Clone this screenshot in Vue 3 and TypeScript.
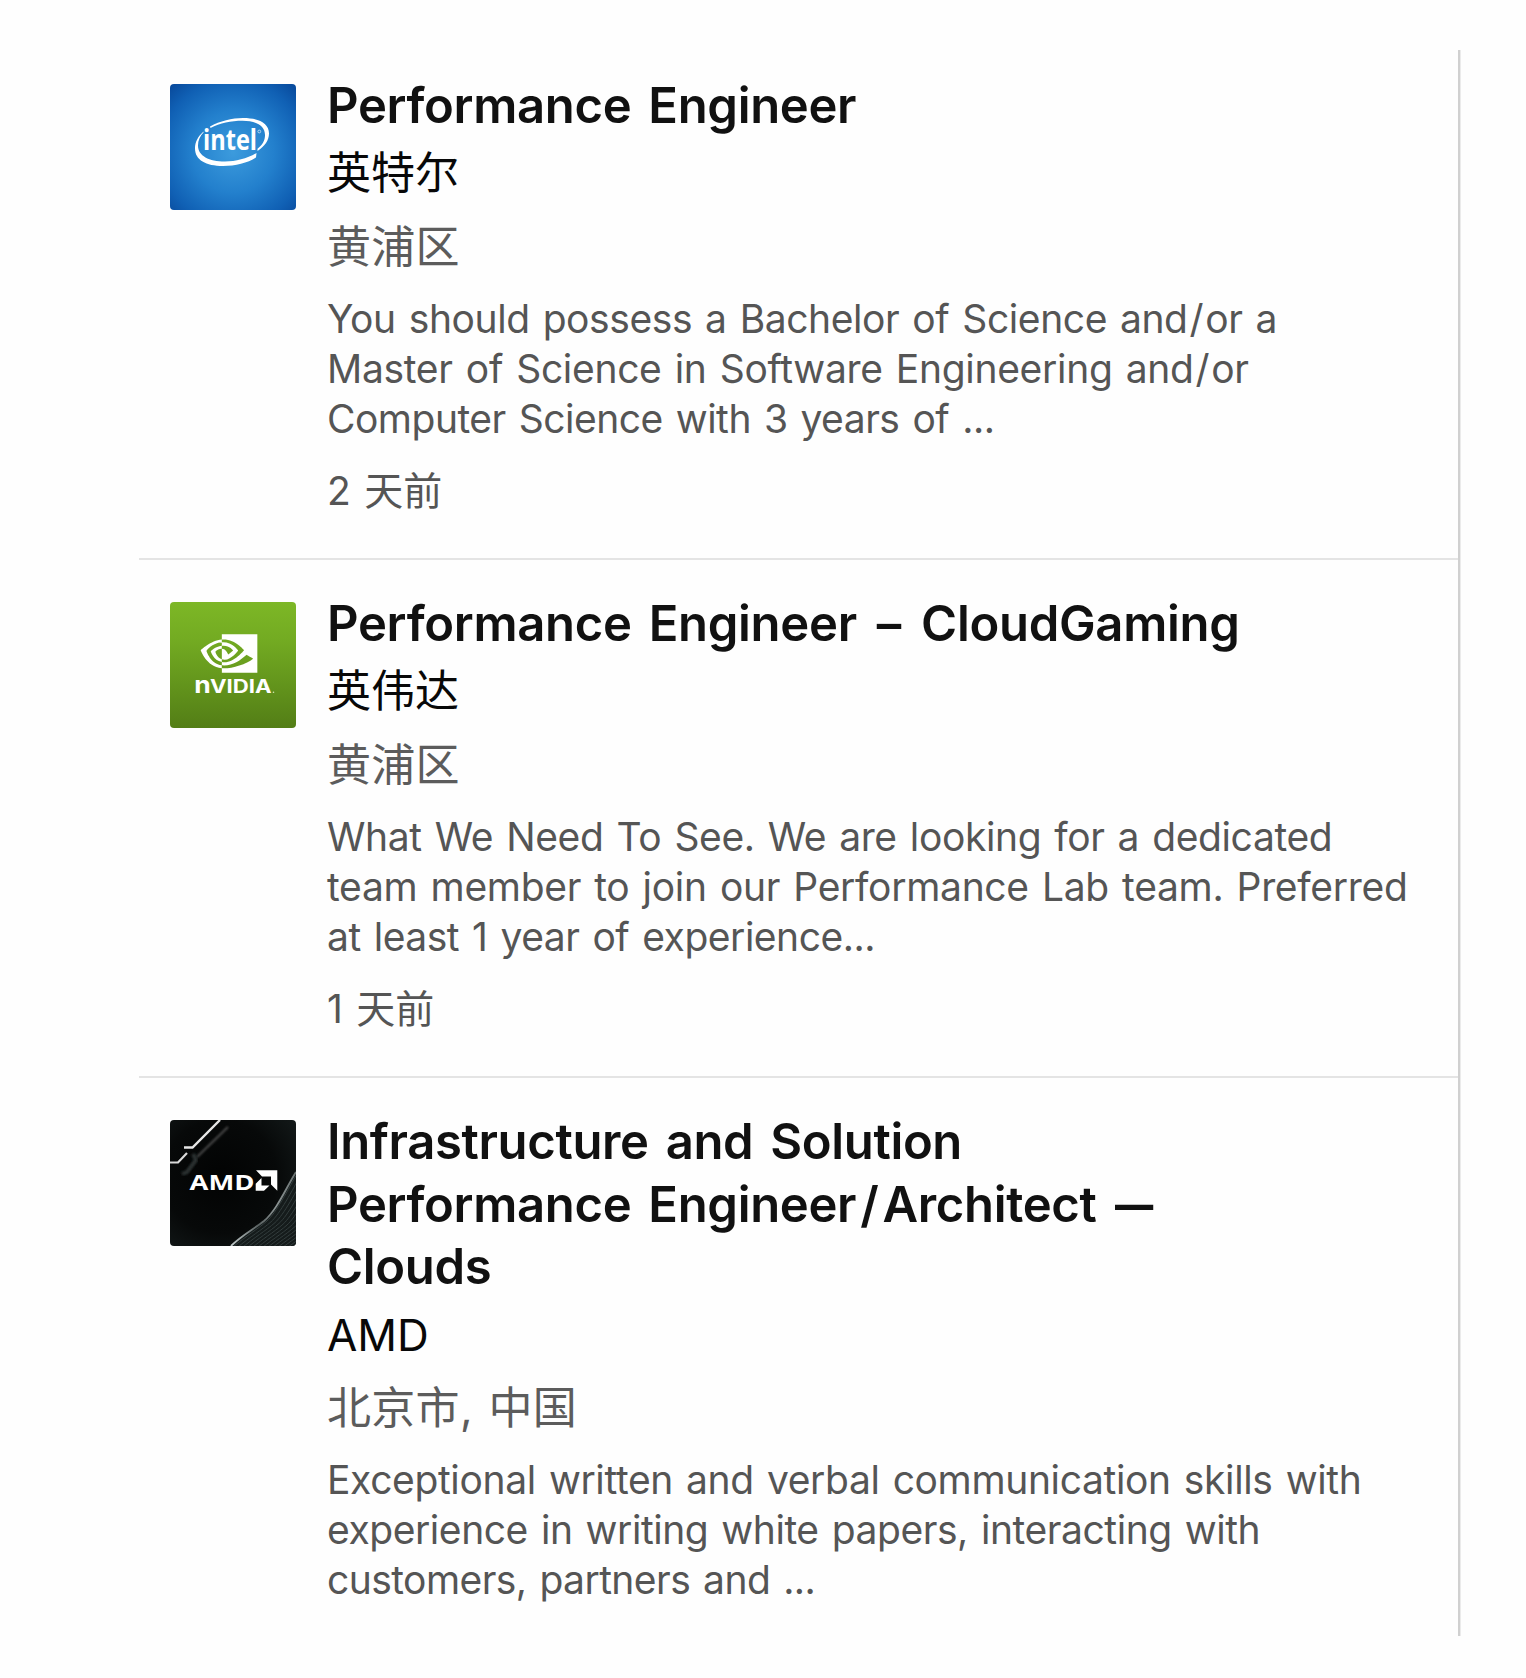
<script setup lang="ts">
interface Line {
  text: string
  /** letter spacing in px */
  track: number
}

interface Job {
  id: 'intel' | 'nvidia' | 'amd'
  title: Line[]
  company: string
  location: string
  summary: Line[]
  posted?: string
}

const jobs: Job[] = [
  {
    id: 'intel',
    title: [{ text: 'Performance Engineer', track: -0.33 }],
    company: '英特尔',
    location: '黄浦区',
    summary: [
      { text: 'You should possess a Bachelor of Science and/or a', track: -0.42 },
      { text: 'Master of Science in Software Engineering and/or', track: -0.31 },
      { text: 'Computer Science with 3 years of ...', track: -0.5 },
    ],
    posted: '2 天前',
  },
  {
    id: 'nvidia',
    title: [{ text: 'Performance Engineer – CloudGaming', track: -0.3 }],
    company: '英伟达',
    location: '黄浦区',
    summary: [
      { text: 'What We Need To See. We are looking for a dedicated', track: -0.38 },
      { text: 'team member to join our Performance Lab team. Preferred', track: -0.3 },
      { text: 'at least 1 year of experience...', track: -0.48 },
    ],
    posted: '1 天前',
  },
  {
    id: 'amd',
    title: [
      { text: 'Infrastructure and Solution', track: -0.35 },
      { text: 'Performance Engineer/Architect —', track: -0.33 },
      { text: 'Clouds', track: -0.3 },
    ],
    company: 'AMD',
    location: '北京市, 中国',
    summary: [
      { text: 'Exceptional written and verbal communication skills with', track: -0.36 },
      { text: 'experience in writing white papers, interacting with', track: -0.44 },
      { text: 'customers, partners and ...', track: -0.56 },
    ],
  },
]

const markClass: Record<string, string> = { '/': 'slash', '–': 'en-dash', '—': 'em-dash' }
const parts = (text: string) => text.split(/([/–—])/).filter(Boolean)

const ribs = Array.from({ length: 17 }, (_, i) => i * 4)
</script>

<template>
  <main class="page">
    <ul class="list">
      <li v-for="job in jobs" :key="job.id" class="item">
        <svg v-if="job.id === 'intel'" class="logo" viewBox="0 0 126 126">
          <defs>
            <radialGradient id="intel-bg" cx="0.5" cy="0.54" r="0.72">
              <stop offset="0" stop-color="#3c9bdd" />
              <stop offset="0.45" stop-color="#2380cd" />
              <stop offset="0.8" stop-color="#1060b4" />
              <stop offset="1" stop-color="#084a9c" />
            </radialGradient>
          </defs>
          <rect width="126" height="126" fill="url(#intel-bg)" />
          <path
            fill="#fff"
            d="M40 42.500C50 37 62 34 73 34c16 0 26 5.500 26 15.500 0 7-4.500 13-11.500 17.500v-2.300C92.500 61 95 56.500 95 51 95 41.500 86 36.800 72.500 36.800 61 36.800 50 39 40.500 44z"
          />
          <path
            fill="#fff"
            d="M33.500 47.500C28 52.500 25 58 25 64.500 25 76 36 82 53 82c12.500 0 24.500-3 33-8.500l.500-4.500C77 74.500 66 77.500 55 77.500 39 77.500 28 72 28 61.500c0-5 2-9.500 5.500-13z"
          />
          <text class="intel-word" x="33" y="65.800" textLength="54" lengthAdjust="spacingAndGlyphs">intel</text>
          <circle cx="89.300" cy="47.500" r="1.400" fill="none" stroke="#fff" stroke-width="0.600" />
        </svg>

        <svg v-else-if="job.id === 'nvidia'" class="logo" viewBox="0 0 126 126">
          <defs>
            <linearGradient id="nvidia-bg" x1="0" y1="0" x2="0" y2="1">
              <stop offset="0" stop-color="#7db726" />
              <stop offset="0.3" stop-color="#73ab22" />
              <stop offset="1" stop-color="#537e16" />
            </linearGradient>
          </defs>
          <rect width="126" height="126" fill="url(#nvidia-bg)" />
          <g transform="translate(30.700 22.500) scale(2.360 2.420)">
            <path
              fill="#fff"
              d="M8.948 8.798v-1.430a6.700 6.700 0 0 1 .424-.018c3.922-.124 6.493 3.374 6.493 3.374s-2.774 3.851-5.750 3.851c-.398 0-.787-.062-1.158-.185v-4.346c1.528.185 1.837.857 2.747 2.385l2.040-1.714s-1.492-1.952-4-1.952a6.016 6.016 0 0 0-.796.035m0-4.735v2.138l.424-.027c5.450-.185 9.010 4.470 9.010 4.470s-4.080 4.964-8.330 4.964c-.370 0-.733-.035-1.095-.097v1.325c.300.035.610.062.910.062 3.957 0 6.820-2.023 9.593-4.408.459.371 2.340 1.263 2.730 1.652-2.633 2.208-8.772 3.984-12.253 3.984-.335 0-.653-.018-.971-.053v1.864H24V4.063zm0 10.326v1.131c-3.657-.654-4.673-4.460-4.673-4.460s1.758-1.944 4.673-2.262v1.237H8.940c-1.528-.186-2.730 1.245-2.730 1.245s.680 2.412 2.739 3.110M2.456 10.900s2.164-3.197 6.500-3.533V6.201C4.153 6.590 0 10.653 0 10.653s2.350 6.802 8.948 7.420v-1.237c-4.840-.600-6.492-5.936-6.492-5.936z"
            />
          </g>
          <text class="nvidia-n" x="24.300" y="91" textLength="16.500" lengthAdjust="spacingAndGlyphs">n</text>
          <text class="nvidia-word" x="40" y="91" textLength="61.500" lengthAdjust="spacingAndGlyphs">VIDIA</text>
          <circle cx="103.500" cy="90.300" r="0.800" fill="#d5e6b8" />
        </svg>

        <svg v-else class="logo" viewBox="0 0 126 126">
          <defs>
            <radialGradient id="amd-bg" cx="0.4" cy="0.45" r="0.75">
              <stop offset="0" stop-color="#020303" />
              <stop offset="0.6" stop-color="#070909" />
              <stop offset="1" stop-color="#131919" />
            </radialGradient>
            <linearGradient id="amd-edge" x1="0" y1="1" x2="1" y2="0">
              <stop offset="0" stop-color="#c3cccc" />
              <stop offset="0.35" stop-color="#596161" />
              <stop offset="0.6" stop-color="#8c9494" />
              <stop offset="1" stop-color="#6b7373" />
            </linearGradient>
            <clipPath id="amd-panel">
              <path d="M61 126C72 115 84 109 94 101 107 90 116 68 126 52v74z" />
            </clipPath>
            <filter id="amd-soft"><feGaussianBlur stdDeviation="1.300" /></filter>
          </defs>
          <rect width="126" height="126" fill="url(#amd-bg)" />
          <path d="M58 7 27 37" stroke="#4c4c4c" stroke-width="2" filter="url(#amd-soft)" />
          <path d="M12 54l5-2 9-12-3-6" fill="none" stroke="#2c3030" stroke-width="4" filter="url(#amd-soft)" />
          <path d="M14 27.500h8.500L50 0" fill="none" stroke="#e6e6e6" stroke-width="2.400" />
          <path d="M0 42.500h8l9-9.500" fill="none" stroke="#d8d8d8" stroke-width="2.200" />
          <g clip-path="url(#amd-panel)">
            <rect x="60" y="50" width="66" height="76" fill="#151b1b" />
            <path
              v-for="r in ribs"
              :key="r"
              :d="`M${63 + r} ${127 + r * 0.2}C${76 + r} ${116 + r * 0.2} ${88 + r} ${109 + r * 0.2} ${97 + r} ${101 + r * 0.2}S${118 + r} ${70 + r * 0.2} ${128 + r} ${52 + r * 0.2}`"
              fill="none"
              stroke="#333d3d"
              stroke-width="1"
            />
          </g>
          <path d="M61 126C72 115 84 109 94 101 107 90 116 68 126 52" fill="none" stroke="url(#amd-edge)" stroke-width="1.800" />
          <text class="amd-word" x="19.500" y="69.800" textLength="65" lengthAdjust="spacingAndGlyphs">AMD</text>
          <path fill="#fff" d="M86 50.300h21.300v20.400L101 64.500v-8H92z" />
          <path fill="#fff" d="M91.500 58v7.500h8L94 70.700h-8.300v-7z" />
        </svg>

        <div class="body">
          <h2 class="title">
            <span v-for="line in job.title" :key="line.text" class="line" :style="{ letterSpacing: line.track + 'px' }"><span v-for="(part, i) in parts(line.text)" :key="i" :class="markClass[part]">{{ part }}</span></span>
          </h2>
          <p class="company">{{ job.company }}</p>
          <p class="location">{{ job.location }}</p>
          <p class="summary">
            <span v-for="line in job.summary" :key="line.text" class="line" :style="{ letterSpacing: line.track + 'px' }"><span v-for="(part, i) in parts(line.text)" :key="i" :class="markClass[part]">{{ part }}</span></span>
          </p>
          <p v-if="job.posted" class="posted">{{ job.posted }}</p>
        </div>
      </li>
    </ul>
  </main>
</template>

<style>
body {
  background: #fefefe;
}
</style>

<style scoped>
.page {
  box-sizing: border-box;
  width: 1526px;
  height: 1678px;
  padding: 50px 65px 42px 139px;
  overflow: hidden;
  font-family: Inter, 'Noto Sans CJK SC', sans-serif;
}

.list {
  box-sizing: border-box;
  width: 1321px;
  height: 1586px;
  margin: 0;
  padding: 0;
  list-style: none;
  border-right: 2px solid #d0d0d0;
  box-shadow: 1px 0 #ebebeb;
}

.item {
  box-sizing: border-box;
  display: flex;
  align-items: flex-start;
  gap: 31px;
  height: 518px;
  padding: 42px 0 0 31px;
  border-bottom: 2px solid #e4e4e4;
}

.item:first-child {
  height: 510px;
  padding-top: 34px;
}

.item:last-child {
  border-bottom: 0;
}

.logo {
  flex: none;
  width: 126px;
  height: 126px;
  border-radius: 4px;
}

.intel-word {
  font: 700 28.500px 'Open Sans', sans-serif;
  fill: #fff;
}

.nvidia-n {
  font: 700 24px Inter, sans-serif;
  fill: #fff;
}

.nvidia-word {
  font: 700 18.300px Inter, sans-serif;
  fill: #fff;
}

.amd-word {
  font: 700 20.600px 'Open Sans', sans-serif;
  fill: #fff;
}

.body {
  margin-top: -9px;
}

.title,
.company,
.location,
.summary,
.posted {
  margin: 0;
  white-space: nowrap;
}

.line {
  display: block;
}

.title {
  font-size: 49px;
  font-weight: 600;
  line-height: 62.700px;
  word-spacing: 5px;
  color: #111;
}

.title .slash {
  padding: 0 4px;
}

.title .en-dash {
  padding: 0 3px;
}

.title .em-dash {
  display: inline-block;
  transform: scaleX(0.78);
  transform-origin: 4px 50%;
}

.summary .slash {
  padding: 0 2px;
}

.company {
  margin-top: 3.500px;
  font-size: 44px;
  line-height: 64px;
  color: #080808;
}

.location {
  margin-top: 9.500px;
  font-size: 44px;
  line-height: 64px;
  letter-spacing: 0.300px;
  word-spacing: 3px;
  color: #5c5c5c;
}

.summary {
  margin-top: 15px;
  font-size: 39px;
  line-height: 50px;
  word-spacing: 2.500px;
  color: #555;
}

.posted {
  margin-top: 22.500px;
  font-size: 39px;
  line-height: 50px;
  word-spacing: 2.500px;
  color: #555;
}
</style>
